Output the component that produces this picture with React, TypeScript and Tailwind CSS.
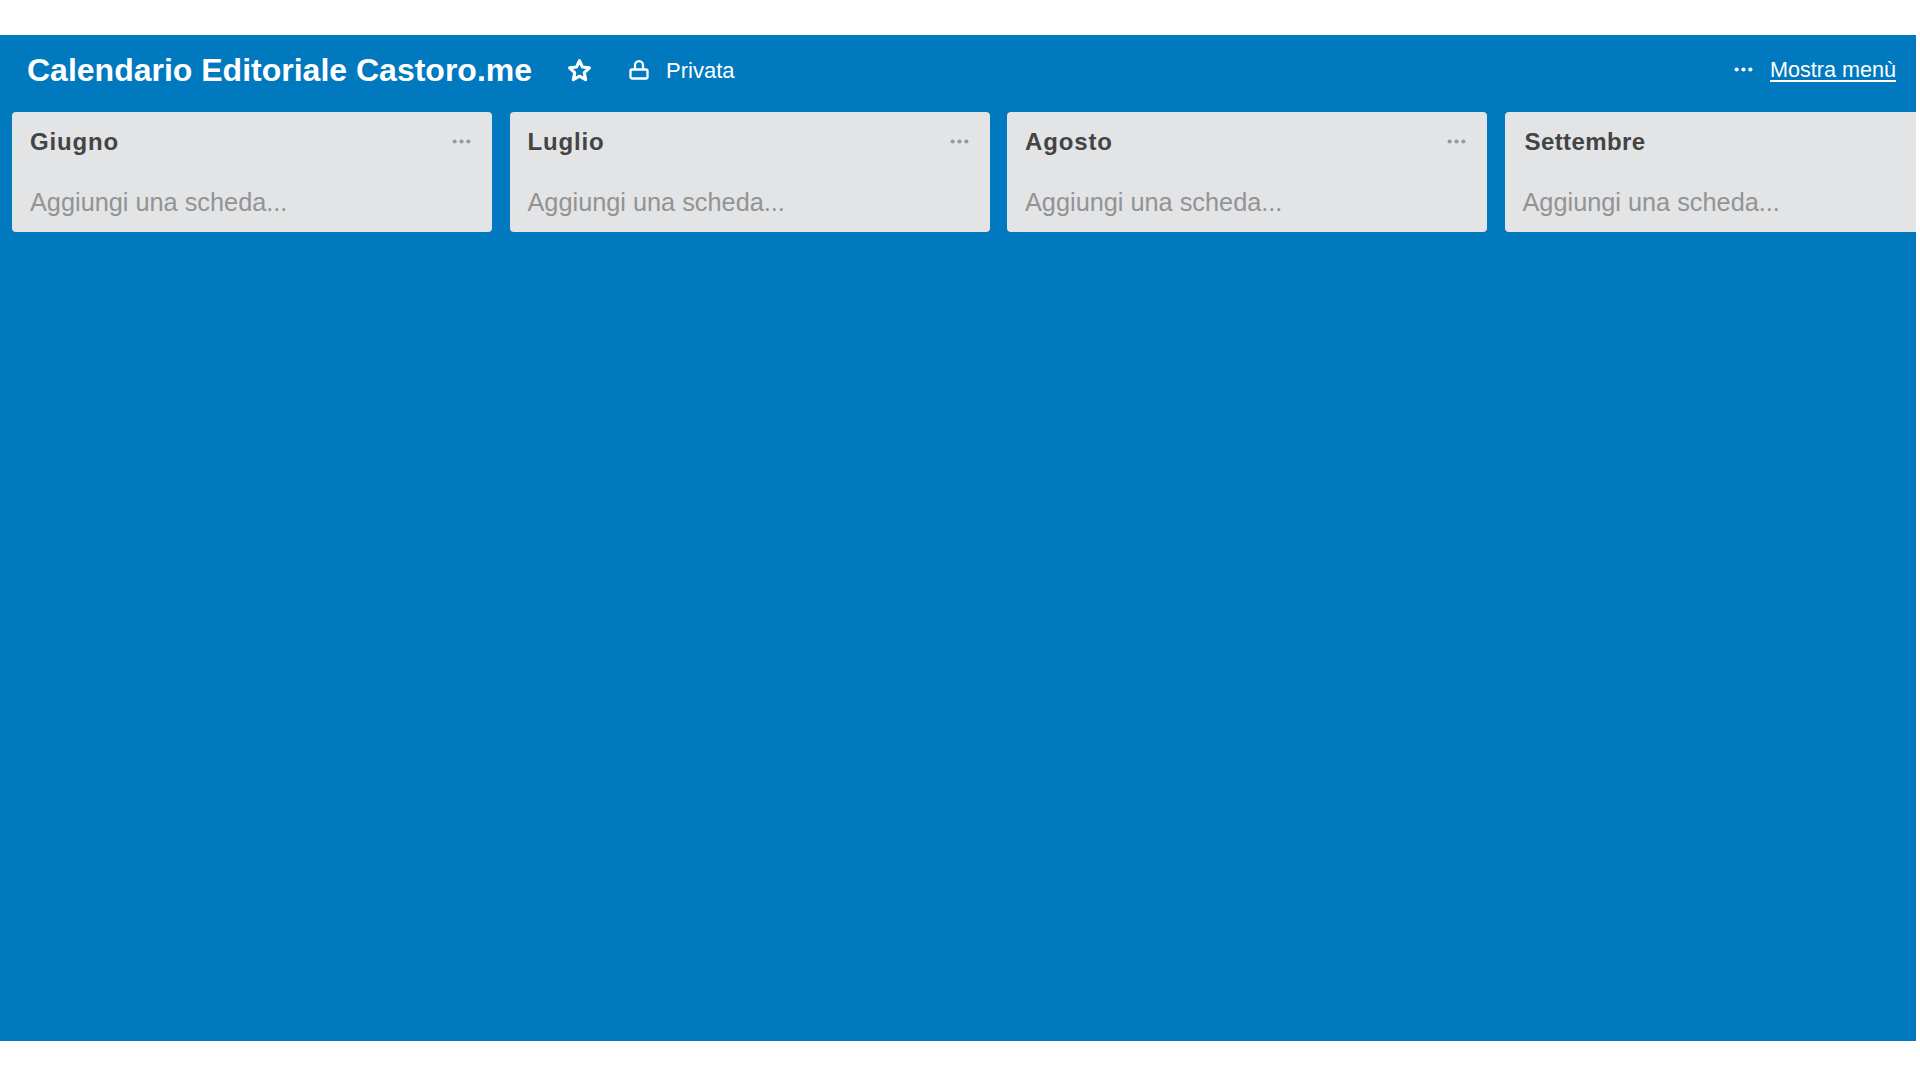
import React from 'react';

const lists = ['Giugno', 'Luglio', 'Agosto', 'Settembre'];

const Dots = ({ className }: { className: string }) => (
  <svg viewBox="0 0 18 4" className={className} fill="currentColor">
    <circle cx="2.5" cy="2" r="2" />
    <circle cx="9" cy="2" r="2" />
    <circle cx="15.5" cy="2" r="2" />
  </svg>
);

const ListCard = ({ title, last }: { title: string; last: boolean }) => (
  <div className={`h-[120px] w-[480px] shrink-0 rounded-[4px] bg-[#e2e4e6] ${last ? 'pl-[18px]' : 'px-[18px]'}`}>
    <div className="flex h-[59px] items-center justify-between pr-[3px]">
      <span className={`text-[24px] font-bold text-[#444444] ${last ? 'pl-[2px] tracking-[0.4px]' : 'tracking-[0.85px]'}`}>{title}</span>
      {!last && <Dots className="h-[5px] w-[19px] text-[#999999]" />}
    </div>
    <div className="mt-[16px] whitespace-nowrap text-[25.3px] leading-[30px] text-[#939393]">Aggiungi una scheda...</div>
  </div>
);

export default function App() {
  return (
    <div className="h-[1080px] w-[1920px] overflow-hidden bg-white pt-[35px] font-['Liberation_Sans',Arial,sans-serif]">
      <div className="h-[1006px] w-[1916px] overflow-hidden bg-[#0079bf]">
        <div className="flex h-[77px] items-center pb-[7px] pl-[27px] pr-[20px] text-white">
          <h1 className="text-[32px] font-bold">Calendario Editoriale Castoro.me</h1>
          <svg viewBox="0 0 24 24" className="ml-[35px] h-[25px] w-[25px]" fill="none" stroke="currentColor" strokeWidth="3" strokeLinejoin="round">
            <path d="M12 2.5l2.9 6.2 6.6.8-4.9 4.6 1.3 6.7-5.9-3.3-5.9 3.3 1.3-6.7-4.9-4.6 6.6-.8z" />
          </svg>
          <svg viewBox="0 0 20 20" className="ml-[37px] h-[20px] w-[20px]" fill="none" stroke="currentColor" strokeWidth="2.3">
            <path d="M6 9.5V5.2a4 4 0 0 1 8 0v4.3" />
            <rect x="1.5" y="9.5" width="17" height="9" rx="1.5" />
          </svg>
          <span className="ml-[17px] text-[22px]">Privata</span>
          <div className="ml-auto flex items-center">
            <Dots className="h-[5px] w-[19px]" />
            <span className="ml-[17px] text-[21.6px] underline underline-offset-[3px]">Mostra menù</span>
          </div>
        </div>
        <div className="flex gap-[17.5px] pl-[12px]">
          {lists.map((name) => (
            <ListCard key={name} title={name} last={name === 'Settembre'} />
          ))}
        </div>
      </div>
    </div>
  );
}
